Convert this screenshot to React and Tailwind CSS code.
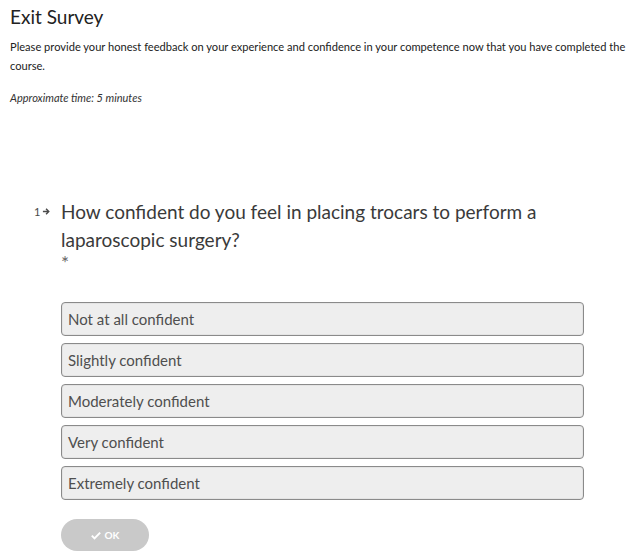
export default function App() {
  const options = [
    "Not at all confident",
    "Slightly confident",
    "Moderately confident",
    "Very confident",
    "Extremely confident",
  ];

  return (
    <div className="min-h-[559px] w-[640px] bg-white font-['Lato','Open_Sans',sans-serif] text-[#333]">
      <div className="px-[10px] pt-[5px]">
        <h1 className="text-[19px] leading-[24px] text-[#222]">Exit Survey</h1>
        <p className="mt-[8px] text-[11.1px] leading-[19px] text-[#222]">
          Please provide your honest feedback on your experience and confidence in your competence now that you have completed the course.
        </p>
        <p className="mt-[15px] text-[11px] italic leading-[16px] text-[#333]">Approximate time: 5 minutes</p>
      </div>

      <div className="mt-[92px] pl-[61px] pr-[56px]">
        <div className="relative">
          <span className="absolute left-[-27px] top-[8px] flex items-center text-[11px] leading-none text-[#4a4a4a]">
            1
            <svg width="9" height="9" viewBox="0 0 10 10" className="ml-[2px]">
              <path d="M1 5h6M4.5 2l3 3-3 3" stroke="#4a4a4a" strokeWidth="1.6" fill="none" />
            </svg>
          </span>
          <h2 className="text-[19px] leading-[28px] text-[#3a3a3a]">
            How confident do you feel in placing trocars to perform a laparoscopic surgery?
          </h2>
          <div className="mt-[2px] text-[19px] leading-[14px] text-[#666]">*</div>
        </div>

        <div className="mt-[32px] flex flex-col gap-[7px]">
          {options.map((o) => (
            <div
              key={o}
              className="flex h-[34px] items-center rounded-[4px] border border-[#8a8a8a] bg-[#eeeeee] pl-[6px] text-[15px] text-[#4f4f4f] shadow-[inset_0_0_0_1px_rgba(0,0,0,0.04)]"
            >
              {o}
            </div>
          ))}
        </div>

        <button className="mt-[19px] flex h-[32px] w-[88px] items-center justify-center gap-[4px] rounded-full bg-[#c9c9c9] text-[10px] font-bold text-white">
          <svg width="10" height="9" viewBox="0 0 12 10">
            <path d="M1 5.2l3.2 3.2L11 1.6" stroke="white" strokeWidth="2.4" fill="none" />
          </svg>
          OK
        </button>
      </div>
    </div>
  );
}
